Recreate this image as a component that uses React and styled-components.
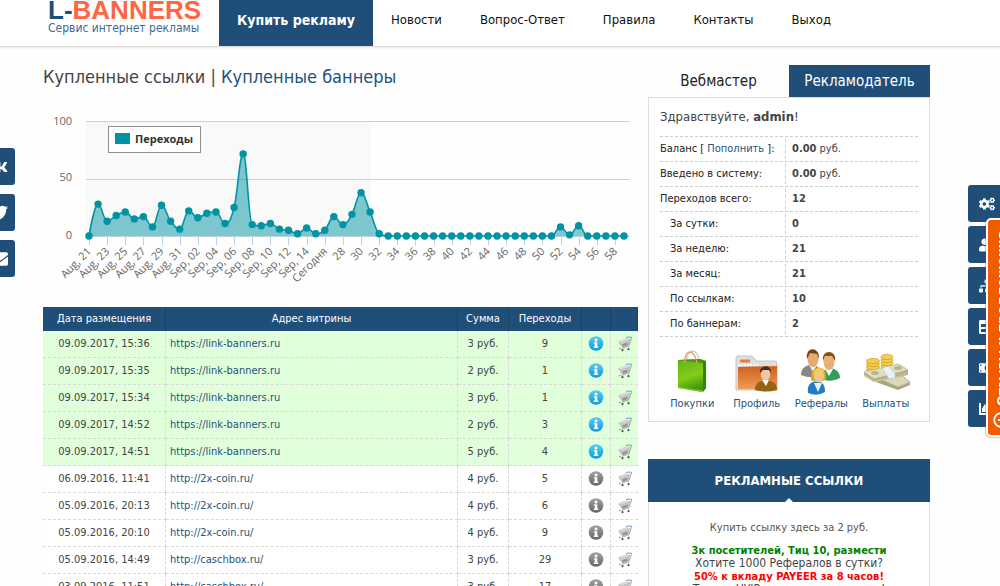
import React from 'react';
import styled, { createGlobalStyle } from 'styled-components';
import { FaCogs, FaTwitter, FaEnvelope, FaVk, FaSitemap, FaTable, FaMoneyBillAlt, FaChartArea, FaUserPlus } from 'react-icons/fa';

const BLUE = '#1f4e79';
const LINK = '#23527c';
const TEAL = '#0093a3';

const clicks = [
  0, 28, 13, 18, 21, 15, 17, 8, 27, 13, 6, 22, 16, 20, 21, 11, 25, 72, 10, 9,
  11, 6, 5, 2, 7, 2, 5, 17, 10, 19, 38, 21, 2, 0, 0, 0, 0, 0, 0, 0,
  0, 0, 0, 0, 0, 0, 0, 0, 0, 0, 0, 0, 8, 1, 9, 0, 0, 0, 0, 0,
];

const tickLabels = [
  'Aug, 21', 'Aug, 23', 'Aug, 25', 'Aug, 27', 'Aug, 29', 'Aug, 31',
  'Sep, 02', 'Sep, 04', 'Sep, 06', 'Sep, 08', 'Sep, 10', 'Sep, 12', 'Sep, 14', 'Сегодня',
  '28', '30', '32', '34', '36', '38', '40', '42', '44', '46', '48', '50', '52', '54', '56', '58',
];

const orders = [
  { date: '09.09.2017, 15:36', url: 'https://link-banners.ru', sum: 3, count: 9, active: true },
  { date: '09.09.2017, 15:35', url: 'https://link-banners.ru', sum: 2, count: 1, active: true },
  { date: '09.09.2017, 15:34', url: 'https://link-banners.ru', sum: 3, count: 1, active: true },
  { date: '09.09.2017, 14:52', url: 'https://link-banners.ru', sum: 2, count: 3, active: true },
  { date: '09.09.2017, 14:51', url: 'https://link-banners.ru', sum: 5, count: 4, active: true },
  { date: '06.09.2016, 11:41', url: 'http://2x-coin.ru/', sum: 4, count: 5 },
  { date: '05.09.2016, 20:13', url: 'http://2x-coin.ru/', sum: 4, count: 6 },
  { date: '05.09.2016, 20:10', url: 'http://2x-coin.ru/', sum: 4, count: 9 },
  { date: '05.09.2016, 14:49', url: 'http://caschbox.ru/', sum: 3, count: 29 },
  { date: '03.09.2016, 11:51', url: 'http://caschbox.ru/', sum: 3, count: 17 },
];

const stats = [
  { label: 'Переходов всего:', value: '12' },
  { label: 'За сутки:', value: '0', sub: true },
  { label: 'За неделю:', value: '21', sub: true },
  { label: 'За месяц:', value: '21', sub: true },
  { label: 'По ссылкам:', value: '10', sub: true },
  { label: 'По баннерам:', value: '2', sub: true },
];

// Chart geometry
const X0 = 46;
const STEP = 535 / 59;
const Y0 = 136;
const UNIT = 1.14;

const points = clicks.map((value, i) => ({ x: X0 + i * STEP, y: Y0 - value * UNIT }));

// smooth line that never overshoots its neighbours
const splinePath = (pts) => {
  let d = `M${pts[0].x} ${pts[0].y}`;
  let right = pts[0];
  for (let i = 1; i < pts.length; i += 1) {
    const prev = pts[i - 1];
    const p = pts[i];
    const next = pts[i + 1];
    let left = p;
    let nextRight = p;
    if (next) {
      let leftY = (1.5 * p.y + prev.y) / 2.5;
      let rightY = (1.5 * p.y + next.y) / 2.5;
      const leftX = (1.5 * p.x + prev.x) / 2.5;
      const rightX = (1.5 * p.x + next.x) / 2.5;
      const correction = ((rightY - leftY) * (rightX - p.x)) / (rightX - leftX) + p.y - rightY;
      leftY += correction;
      rightY += correction;
      if (leftY > Math.max(prev.y, p.y)) {
        leftY = Math.max(prev.y, p.y);
        rightY = 2 * p.y - leftY;
      } else if (leftY < Math.min(prev.y, p.y)) {
        leftY = Math.min(prev.y, p.y);
        rightY = 2 * p.y - leftY;
      }
      if (rightY > Math.max(next.y, p.y)) {
        rightY = Math.max(next.y, p.y);
        leftY = 2 * p.y - rightY;
      } else if (rightY < Math.min(next.y, p.y)) {
        rightY = Math.min(next.y, p.y);
        leftY = 2 * p.y - rightY;
      }
      left = { x: leftX, y: leftY };
      nextRight = { x: rightX, y: rightY };
    }
    d += `C${right.x} ${right.y} ${left.x} ${left.y} ${p.x} ${p.y}`;
    right = nextRight;
  }
  return d;
};

const ClicksChart = () => {
  const line = splinePath(points);
  return (
    <ChartSvg viewBox="0 0 595 207" role="img" aria-label="Переходы">
      <rect x="43" y="21" width="285" height="115" fill="#f9f9f9" />
      <path d="M43 21.5H587M43 79.5H587" stroke="#d0d0d0" />
      <path d="M43 136.5H587" stroke="#c0d0e0" />
      {tickLabels.map((label, i) => {
        const x = X0 + i * 2 * STEP;
        return (
          <g key={label}>
            <path d={`M${Math.round(x) + 0.5} 136V145`} stroke="#c0d0e0" />
            <AxisText textAnchor="end" transform={`translate(${x + 3} 152) rotate(-45)`}>{label}</AxisText>
          </g>
        );
      })}
      <AxisText textAnchor="end" x="29" y="25">100</AxisText>
      <AxisText textAnchor="end" x="29" y="81">50</AxisText>
      <AxisText textAnchor="end" x="29" y="139">0</AxisText>
      <path d={`${line}V${Y0}H${X0}Z`} fill={TEAL} fillOpacity="0.5" />
      <path d={line} fill="none" stroke={TEAL} strokeWidth="1.6" />
      {points.map((p) => <circle key={p.x} cx={p.x} cy={p.y} r="3.7" fill={TEAL} />)}
      <rect x="65.5" y="26.5" width="92" height="26" fill="#fff" stroke="#909090" />
      <rect x="72" y="33" width="15" height="11" fill={TEAL} />
      <LegendText x="92" y="43">Переходы</LegendText>
    </ChartSvg>
  );
};

const InfoIcon = ({ active }) => (
  <svg width="16" height="16" viewBox="0 0 16 16" aria-hidden="true">
    <defs>
      <linearGradient id={active ? 'infoOn' : 'infoOff'} x1="0" y1="0" x2="0" y2="1">
        <stop offset="0" stopColor={active ? '#58cdf5' : '#a2a2a2'} />
        <stop offset="1" stopColor={active ? '#0a9bdb' : '#666'} />
      </linearGradient>
    </defs>
    <circle cx="8" cy="7.5" r="7.3" fill={`url(#${active ? 'infoOn' : 'infoOff'})`} />
    <circle cx="8" cy="3.9" r="1.5" fill="#fff" />
    <path d="M5.8 6.2H9.3V10.6H10.3V12H5.8V10.6H6.8V7.5H5.8Z" fill="#fff" />
  </svg>
);

const CartIcon = () => (
  <svg width="16" height="16" viewBox="0 0 16 16" aria-hidden="true">
    <path d="M1 5.5L9 2.5L13 3L11.5 9L5 11.5Z" fill="#bdbdbd" />
    <path d="M1 5.5L9 2.5L12.5 3.5L4 6.5Z" fill="#dcdcdc" />
    <path d="M3 8L11.5 5.5M4 10L11 7.5" stroke="#dedede" strokeWidth="0.5" />
    <path d="M5 8.5L10.5 6.5V9L6 10.8Z" fill="#858585" opacity="0.8" />
    <path d="M9 1.4L13 1Q15 1 14.5 2.8" fill="none" stroke="#7fabd8" strokeWidth="1.1" />
    <path d="M14.2 2.8L12 9.5L5 12.3" fill="none" stroke="#a0a0a0" />
    <path d="M5 12V14M11.5 10V13" stroke="#bbb" strokeWidth="0.7" />
    <circle cx="5.5" cy="14.2" r="1.1" fill="#555" />
    <circle cx="11.5" cy="13.2" r="1.1" fill="#555" />
    <circle cx="2.8" cy="12.5" r="0.8" fill="#888" />
  </svg>
);

const BagIcon = () => (
  <svg width="48" height="48" viewBox="0 0 48 48" aria-hidden="true">
    <defs>
      <linearGradient id="bag" x1="0" y1="0" x2="0.3" y2="1">
        <stop offset="0" stopColor="#5cb312" />
        <stop offset="0.6" stopColor="#84cc18" />
        <stop offset="1" stopColor="#3f9a0c" />
      </linearGradient>
    </defs>
    <path d="M19 13C18 0 30 0 31 12" fill="none" stroke="#d9c3ae" strokeWidth="1.2" />
    <path d="M10 12L32 11L38 13V40L34 44L10 40Z" fill="url(#bag)" />
    <path d="M10 12L32 11L38 13L35 15Z" fill="#3f9310" />
    <path d="M35 14L38 13V40L35 44Z" fill="#2f850b" />
    <path d="M17 15C15 3 26 -2 29 15" fill="none" stroke="#e0a070" strokeWidth="1.3" />
    <path d="M11 39L34 42V44L10 40Z" fill="#b3d936" opacity="0.5" />
  </svg>
);

const ProfileIcon = () => (
  <svg width="48" height="48" viewBox="0 0 48 48" aria-hidden="true">
    <defs>
      <linearGradient id="folder" x1="0" y1="0" x2="0" y2="1">
        <stop offset="0" stopColor="#cf601c" />
        <stop offset="1" stopColor="#f39a58" />
      </linearGradient>
    </defs>
    <path d="M3 42V10Q3 8 5 8H19L24 13H42Q44 13 44 15V42Z" fill="#dedede" stroke="#c5c5c5" />
    <path d="M7 13H17" stroke="#e6803d" strokeWidth="3" />
    <path d="M5 19L44 18V41H5Z" fill="url(#folder)" />
    <path d="M5 17H26" stroke="#f7f7f7" strokeWidth="2" strokeDasharray="2 1" />
    <path d="M22 42C22 34 27 33 32 32C39 33 44 34 44 42Q33 45 22 42Z" fill="#946313" />
    <path d="M29 32L33 38L36 32Z" fill="#fff" />
    <ellipse cx="32.5" cy="26" rx="4.8" ry="6.5" fill="#efc8a4" />
    <path d="M27 25C26 16 39 16 38 25L36 22H30Z" fill="#4a2d20" />
  </svg>
);

const PeopleIcon = () => (
  <svg width="48" height="48" viewBox="0 0 48 48" aria-hidden="true">
    <path d="M4 27C4 20 8 18 15 16C21 18 24 21 23 28Q13 31 4 27Z" fill="#888" />
    <path d="M12 17L16 24L20 17Z" fill="#eee" />
    <ellipse cx="16" cy="11" rx="5.5" ry="8" fill="#e4ab6c" />
    <path d="M10 11C8 -2 23 -2 22 11L20 6L13 5Z" fill="#70441b" />
    <path d="M24 31C24 24 27 21 33 20C40 21 43 25 43 30Q34 35 24 31Z" fill="#369b55" />
    <path d="M28 21L32 28L36 21Z" fill="#fff" />
    <ellipse cx="32" cy="14" rx="5.5" ry="8" fill="#e8b176" />
    <path d="M26 13C24 1 40 1 38 13L35 8L28 8Z" fill="#80511c" />
    <path d="M11 45C10 36 14 34 20 33C26 34 28 37 28 44Q20 49 11 45Z" fill="#267bc5" />
    <path d="M17 35L21 44L25 35Z" fill="#e5f4ff" />
    <path d="M14 32C12 16 31 15 29 31Q22 37 14 32Z" fill="#d9a72b" />
    <ellipse cx="22" cy="28" rx="5" ry="6.5" fill="#f0c889" />
    <path d="M16 27C17 19 25 17 28 25L23 22Z" fill="#f2cc46" />
  </svg>
);

const MoneyIcon = () => (
  <svg width="48" height="48" viewBox="0 0 48 48" aria-hidden="true">
    {[21, 18, 15, 12, 9].map((y) => <ellipse key={y} cx="25" cy={y} rx="6" ry="2.6" fill="#f3cd4c" stroke="#cf9a20" strokeWidth="0.7" />)}
    {[25, 22, 19, 16, 13].map((y) => <ellipse key={y} cx="11" cy={y} rx="6.5" ry="2.6" fill="#f3cd4c" stroke="#cf9a20" strokeWidth="0.7" />)}
    <path d="M14 30L37 25L48 34V37L36 42L14 34Z" fill="#aaa67f" />
    <path d="M14 29L37 25L48 34L36 39Z" fill="#dcd8b8" stroke="#b8b38c" strokeWidth="0.7" />
    <path d="M2 25L37 16L46 22V27L12 34L2 28Z" fill="#a9a578" />
    <path d="M2 24L36 16L46 22L12 31Z" fill="#e2dfbf" stroke="#b9b489" strokeWidth="0.7" />
    <path d="M2 26L12 33L46 24M2 27L12 34L46 26" fill="none" stroke="#e1ddbd" strokeWidth="0.6" />
    <ellipse cx="13" cy="25" rx="4" ry="2" fill="#b9b58c" />
    <ellipse cx="36" cy="20" rx="4" ry="2" fill="#b9b58c" />
    <path d="M20 20L27 18L33 26V30L27 31Z" fill="#e9f2f6" stroke="#b6c5cf" strokeWidth="0.6" />
  </svg>
);

const FeedbackIcon = () => (
  <svg width="16" height="16" viewBox="0 0 16 16" fill="none" stroke="#fff" strokeWidth="1.8" aria-hidden="true">
    <circle cx="8" cy="8" r="6.8" />
    <path d="M8 4.5V8H11" />
  </svg>
);

const shortcuts = [
  { label: 'Покупки', Icon: BagIcon },
  { label: 'Профиль', Icon: ProfileIcon },
  { label: 'Рефералы', Icon: PeopleIcon },
  { label: 'Выплаты', Icon: MoneyIcon },
];

const App = () => (
  <Page>
    <GlobalStyle />
    <Header>
      <Logo href="#">
        <LogoName>L-<span>BANNERS</span></LogoName>
        <LogoNote>Сервис интернет рекламы</LogoNote>
      </Logo>
      <Nav>
        <NavLink href="#" $primary>Купить рекламу</NavLink>
        <NavLink href="#">Новости</NavLink>
        <NavLink href="#">Вопрос-Ответ</NavLink>
        <NavLink href="#">Правила</NavLink>
        <NavLink href="#">Контакты</NavLink>
        <NavLink href="#">Выход</NavLink>
      </Nav>
    </Header>

    <Content>
      <Main>
        <Heading>Купленные ссылки | <a href="#">Купленные баннеры</a></Heading>
        <ClicksChart />
        <OrdersTable>
          <colgroup>
            <Col $width="123px" />
            <Col />
            <Col $width="51px" />
            <Col $width="73px" />
            <Col $width="29px" />
            <Col $width="27px" />
          </colgroup>
          <thead>
            <tr>
              <Th>Дата размещения</Th>
              <Th>Адрес витрины</Th>
              <Th>Сумма</Th>
              <Th>Переходы</Th>
              <Th aria-label="Информация" />
              <Th aria-label="В корзину" />
            </tr>
          </thead>
          <tbody>
            {orders.map((order) => (
              <Row key={order.date} $active={order.active}>
                <Td>{order.date}</Td>
                <Td $left><a href="#">{order.url}</a></Td>
                <Td>{order.sum} руб.</Td>
                <Td>{order.count}</Td>
                <Td><IconButton aria-label="Информация"><InfoIcon active={order.active} /></IconButton></Td>
                <Td><IconButton aria-label="В корзину"><CartIcon /></IconButton></Td>
              </Row>
            ))}
          </tbody>
        </OrdersTable>
      </Main>

      <Sidebar>
        <Tabs>
          <Tab>Вебмастер</Tab>
          <Tab $active>Рекламодатель</Tab>
        </Tabs>
        <Account>
          <Greeting>Здравствуйте, <b>admin</b>!</Greeting>
          <Stats>
            <StatRow>
              <StatLabel>Баланс [ <a href="#">Пополнить</a> ]:</StatLabel>
              <StatValue><b>0.00</b> руб.</StatValue>
            </StatRow>
            <StatRow>
              <StatLabel>Введено в систему:</StatLabel>
              <StatValue><b>0.00</b> руб.</StatValue>
            </StatRow>
            {stats.map((stat) => (
              <StatRow key={stat.label}>
                <StatLabel $sub={stat.sub}>{stat.label}</StatLabel>
                <StatValue><b>{stat.value}</b></StatValue>
              </StatRow>
            ))}
          </Stats>
          <Shortcuts>
            {shortcuts.map(({ label, Icon }) => (
              <Shortcut href="#" key={label}><Icon />{label}</Shortcut>
            ))}
          </Shortcuts>
        </Account>

        <Ads>
          <AdsTitle>РЕКЛАМНЫЕ ССЫЛКИ</AdsTitle>
          <AdsBuy href="#">Купить ссылку здесь за 2 руб.</AdsBuy>
          <AdLink href="#" $color="#008000">3к посетителей, Тиц 10, размести</AdLink>
          <AdLink href="#">Хотите 1000 Рефералов в сутки?</AdLink>
          <AdLink href="#" $color="#ff0000">50% к вкладу PAYEER за 8 часов!</AdLink>
          <AdLink href="#">Только HYIP проекты, заходи тут!</AdLink>
        </Ads>
      </Sidebar>
    </Content>

    <Social>
      <SideLink href="#" aria-label="ВКонтакте"><FaVk /></SideLink>
      <SideLink href="#" aria-label="Twitter"><FaTwitter /></SideLink>
      <SideLink href="#" aria-label="Почта"><FaEnvelope /></SideLink>
    </Social>
    <Tools>
      <ToolLink href="#" aria-label="Настройки"><FaCogs /></ToolLink>
      <ToolLink href="#" aria-label="Рефералы"><FaUserPlus /></ToolLink>
      <ToolLink href="#" aria-label="Структура"><FaSitemap /></ToolLink>
      <ToolLink href="#" aria-label="Таблица"><FaTable /></ToolLink>
      <ToolLink href="#" aria-label="Выплаты"><FaMoneyBillAlt /></ToolLink>
      <ToolLink href="#" aria-label="Статистика"><FaChartArea /></ToolLink>
    </Tools>
    <Feedback><FeedbackIcon />Отзывы и предложения</Feedback>
  </Page>
);

const GlobalStyle = createGlobalStyle`
  * {
    box-sizing: border-box;
  }

  body {
    margin: 0;
    background: #fefefe;
    color: #444;
    font-family: Tahoma, "DejaVu Sans Condensed", "Noto Sans", sans-serif;
    font-size: 11px;
    line-height: 16px;
  }

  a {
    color: ${LINK};
    text-decoration: none;
  }

  button {
    font-family: inherit;
    cursor: pointer;
  }
`;

const Page = styled.div`
  height: 100vh;
  overflow: hidden;
`;

const Header = styled.header`
  display: flex;
  height: 47px;
  padding-left: 48px;
  background: #fff;
  border-bottom: 1px solid #dcdcdc;
  box-shadow: 0 1px 2px #e8e8e8;
`;

const Logo = styled.a`
  width: 171px;
`;

const LogoName = styled.div`
  color: ${BLUE};
  font: bold 26px/20px "Liberation Sans", Arial, sans-serif;

  span {
    color: #ff6644;
  }
`;

const LogoNote = styled.div`
  color: #3d6a94;
  font-size: 12px;
`;

const Nav = styled.nav`
  display: flex;
`;

const NavLink = styled.a`
  padding: 0 18px;
  margin-right: ${props => props.$primary ? '0' : '2px'};
  background: ${props => props.$primary ? BLUE : 'transparent'};
  color: ${props => props.$primary ? '#fff' : '#111'};
  font-size: ${props => props.$primary ? '14px' : '13px'};
  font-weight: ${props => props.$primary ? 'bold' : 'normal'};
  line-height: 40px;
`;

const Content = styled.div`
  display: grid;
  grid-template-columns: minmax(0, 1fr) 282px;
  gap: 10px;
  padding: 18px 70px 0 43px;
`;

const Main = styled.main`
  min-width: 0;
`;

const Heading = styled.h1`
  margin: 0;
  height: 35px;
  font-size: 18px;
  font-weight: normal;
  line-height: 24px;
`;

const ChartSvg = styled.svg`
  display: block;
  width: 100%;
`;

const AxisText = styled.text`
  fill: #666;
  font: 11px "Open Sans", sans-serif;
`;

const LegendText = styled.text`
  fill: #333;
  font: bold 11px "Open Sans", sans-serif;
`;

const OrdersTable = styled.table`
  width: 100%;
  border-collapse: separate;
  border-spacing: 0;
  table-layout: fixed;
  text-align: center;
`;

const Col = styled.col`
  width: ${props => props.$width || 'auto'};
`;

const Th = styled.th`
  height: 24px;
  padding: 0;
  background: ${BLUE};
  border-right: 1px solid #1a4166;
  color: #fff;
  font-weight: normal;
`;

const Row = styled.tr`
  background: ${props => props.$active ? '#e1ffdb' : '#fff'};
`;

const Td = styled.td`
  height: 27px;
  padding: 0 4px;
  border-right: 1px dashed #d9d9d9;
  border-bottom: 1px dashed #d9d9d9;
  text-align: ${props => props.$left ? 'left' : 'center'};
  white-space: nowrap;

  &:last-child {
    border-right: 0;
  }
`;

const IconButton = styled.button`
  display: block;
  margin: 0 auto;
  padding: 0;
  border: 0;
  background: none;

  svg {
    display: block;
  }
`;

const Sidebar = styled.aside`
  display: flex;
  flex-direction: column;
`;

const Tabs = styled.div`
  display: flex;
`;

const Tab = styled.button`
  flex: 1;
  height: 32px;
  padding: 0;
  border: 0;
  background: ${props => props.$active ? BLUE : 'transparent'};
  color: ${props => props.$active ? '#fff' : '#222'};
  font-size: 15px;
`;

const Account = styled.section`
  padding: 9px 11px;
  border: 1px solid #ddd;
  background: #fff;
`;

const Greeting = styled.div`
  height: 29px;
  font-size: 13px;
  line-height: 20px;
`;

const Stats = styled.div`
  border-top: 1px dashed #ccc;
`;

const StatRow = styled.div`
  display: flex;
  align-items: center;
  height: 25px;
  border-bottom: 1px dashed #ccc;
`;

const StatLabel = styled.div`
  width: 126px;
  padding-left: ${props => props.$sub ? '10px' : '0'};
  border-right: 1px dashed #ccc;
  color: #222;
  line-height: 20px;
  white-space: nowrap;
`;

const StatValue = styled.div`
  padding-left: 6px;
`;

const Shortcuts = styled.div`
  display: grid;
  grid-template-columns: repeat(4, 1fr);
  margin-top: 11px;
`;

const Shortcut = styled.a`
  display: flex;
  flex-direction: column;
  align-items: center;
`;

const Ads = styled.section`
  display: flex;
  flex-direction: column;
  margin-top: 37px;
  border: 1px solid #ddd;
  border-top: 0;
  background: #fff;
  text-align: center;
`;

const AdsTitle = styled.h2`
  position: relative;
  margin: 0 -1px 18px;
  background: ${BLUE};
  color: #fff;
  font-size: 13px;
  line-height: 43px;

  &::after {
    content: '';
    position: absolute;
    bottom: 0;
    left: 50%;
    margin-left: -4px;
    border: 4px solid transparent;
    border-top: 0;
    border-bottom-color: #fff;
  }
`;

const AdsBuy = styled.a`
  margin-bottom: 8px;
  color: #555;
`;

const AdLink = styled.a`
  color: ${props => props.$color || '#444'};
  font-size: ${props => props.$color ? '11px' : '12px'};
  font-weight: ${props => props.$color ? 'bold' : 'normal'};
  line-height: 13px;
`;

const Social = styled.div`
  position: fixed;
  top: 148px;
  left: 0;
  display: grid;
  gap: 9px;
`;

const SideLink = styled.a`
  display: flex;
  align-items: center;
  justify-content: flex-end;
  width: 15px;
  height: 37px;
  padding-right: 7px;
  overflow: hidden;
  border-radius: 0 3px 3px 0;
  background: ${BLUE};
  color: #fff;
  font-size: 18px;

  svg {
    flex: none;
  }
`;

const Tools = styled.div`
  position: fixed;
  top: 185px;
  right: 0;
  display: grid;
  gap: 4px;
`;

const ToolLink = styled(SideLink)`
  justify-content: flex-start;
  width: 32px;
  padding: 0 0 0 11px;
  border-radius: 3px 0 0 3px;
  font-size: 16px;
`;

const Feedback = styled.button`
  position: fixed;
  top: 218px;
  right: -17px;
  display: flex;
  align-items: center;
  gap: 6px;
  width: 31px;
  height: 219px;
  padding: 7px 0;
  border: 2px solid #fff;
  border-radius: 5px;
  background: #f25c00;
  box-shadow: 0 0 2px #555;
  color: #fff;
  font-size: 14px;
  font-weight: bold;
  writing-mode: vertical-rl;
  white-space: nowrap;
  transform: rotate(180deg);

  svg {
    flex: none;
  }
`;

export default App;
